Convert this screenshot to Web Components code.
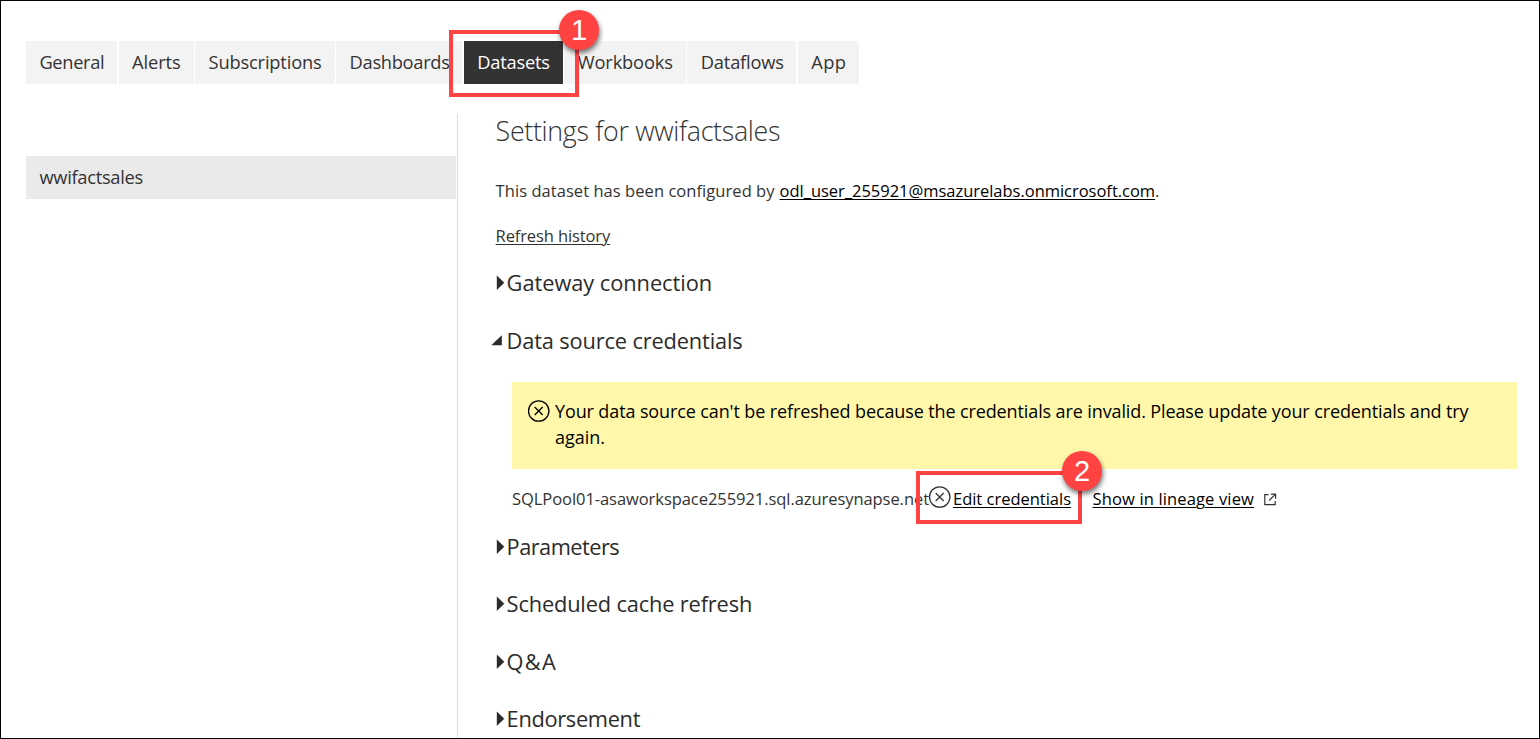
<!DOCTYPE html>
<html lang="en">
<head>
<meta charset="utf-8">
<title>Settings</title>
<style>
html,body{margin:0;height:100%;overflow:hidden;background:#fff}
body{font-family:"Open Sans","Noto Sans",sans-serif;color:#333}
</style>
</head>
<body>
<settings-page></settings-page>
<script>
const define = (name, html, ready) => customElements.define(name, class extends HTMLElement {
  constructor() { super(); this.attachShadow({ mode: 'open' }).innerHTML = html; }
  connectedCallback() { if (ready) ready(this, this.shadowRoot); }
});

// Spreads its text over the width given in the "w" attribute.
define('fit-text', `<style>:host{display:inline-block;white-space:nowrap}span{display:inline-block}
:host([link]) span{text-decoration:underline;text-decoration-thickness:1px;text-underline-offset:2px}
</style><span><slot></slot></span>`, (el, root) => {
  const s = root.querySelector('span'), w = parseFloat(el.getAttribute('w'));
  const n = el.textContent.length;
  s.style.letterSpacing = ((w - s.getBoundingClientRect().width) / n) + 'px';
  el.style.width = w + 'px';
});

define('error-icon', `<style>:host{display:block;width:22px;height:22px;flex:none}svg{display:block}</style>
<svg width="22" height="22" viewBox="0 0 22 22" fill="none" stroke="currentColor" stroke-width="1.3"><circle cx="10.7" cy="11" r="10.2"/><path d="M6.7 7l8 8M14.7 7l-8 8"/></svg>`);

define('external-icon', `<style>:host{display:block;width:13px;height:13px;flex:none}svg{display:block}</style>
<svg width="13" height="13" viewBox="0 0 13 13" fill="none" stroke="#333" stroke-width="1.2"><path d="M4.6 1.6H.8v10h10.4V8M7 1.1h4.6v4.6M11.5 1.2L5.2 7.5"/></svg>`);

define('settings-tab', `<style>
:host{display:block;box-sizing:border-box;height:43px;padding-left:13.4px;background:#f3f3f3;color:#333;font-size:18.3px;line-height:42px;flex:none}
:host([selected]){background:#333;color:#fff}
</style><slot></slot>`, el => { el.style.width = el.getAttribute('width') + 'px'; });

define('dataset-item', `<style>:host{display:block;height:43px;padding-left:13.4px;background:#eaeaea;color:#333;font-size:18.3px;line-height:41px}</style><slot></slot>`);

define('section-heading', `<style>
:host{display:flex;height:57.5px;align-items:flex-start;color:#2b2b2b;font-size:21.8px;line-height:34px}
i{display:block;width:11px;height:34px;flex:none}
svg{display:block;overflow:visible}
.open{display:none}
:host([open]) .open{display:block}:host([open]) .closed{display:none}
</style><i><svg width="11" height="34" fill="#2b2b2b"><path class="closed" d="M.8 9.5V24L8.3 16.7z"/><path class="open" d="M5.8 11.2V21.3H-4.7z"/></svg></i><slot></slot>`);

define('alert-box', `<style>
:host{display:flex;box-sizing:border-box;width:1005px;height:87px;margin:1px 0 0 16.4px;padding:17px 0 0 16px;background:#fff8ab;color:#000;font-size:18px;line-height:25.4px}
error-icon{margin:1px 5px 0 0}
</style><error-icon></error-icon><div><slot></slot></div>`);

define('call-out', `<style>
:host{display:block;position:absolute;box-sizing:border-box;border:4px solid #ff4343}
b{position:absolute;right:-24px;top:-24px;width:40px;height:40px;border-radius:50%;background:#ff4343;color:#fff;font:400 29px/40px "Liberation Sans",Arial,sans-serif;text-align:center;box-shadow:1px 3px 5px rgba(0,0,0,.55)}
</style><b><slot></slot></b>`);

define('settings-page', `<style>
:host{display:block;position:relative;box-sizing:border-box;width:1540px;height:739px;border:1px solid #000;background:#fff;overflow:hidden}
nav{display:flex;gap:1.65px;padding:40px 0 0 25px}
.body{display:flex;margin-top:30px;padding-left:25px}
aside{width:430px;height:582px;padding:42px 1px 0 0;border-right:1px solid #dcdcdc;box-sizing:content-box}
main{padding-left:37.6px;font-size:16.5px}
h1{margin:0;font-size:26.8px;font-weight:300;line-height:34px;height:65px;color:#333}
p{margin:0;height:45px;line-height:24px}
p.refresh{height:42.2px}
.by{display:flex}
.by fit-text[link]{color:#000}
.source{display:flex;margin:18px 0 0 16.4px;height:42.7px;line-height:24px}
.source fit-text[link]{color:#000}
.source error-icon{margin:-1px 2px 0 0}
.source external-icon{margin:6px 0 0 10px}
</style>
<nav>
<settings-tab width="91"><fit-text w="65">General</fit-text></settings-tab>
<settings-tab width="74.9"><fit-text w="48.5">Alerts</fit-text></settings-tab>
<settings-tab width="139.4"><fit-text w="113">Subscriptions</fit-text></settings-tab>
<settings-tab width="126"><fit-text w="100">Dashboards</fit-text></settings-tab>
<settings-tab width="98.9" selected><fit-text w="72.5">Datasets</fit-text></settings-tab>
<settings-tab width="121.4"><fit-text w="95">Workbooks</fit-text></settings-tab>
<settings-tab width="108.8"><fit-text w="83">Dataflows</fit-text></settings-tab>
<settings-tab width="61.4"><fit-text w="35">App</fit-text></settings-tab>
</nav>
<div class="body">
<aside><dataset-item><fit-text w="103.5">wwifactsales</fit-text></dataset-item></aside>
<main>
<h1><fit-text w="284.5">Settings for wwifactsales</fit-text></h1>
<p class="by"><fit-text w="279">This dataset has been configured by</fit-text><fit-text w="375.5" link style="margin-left:5px">odl_user_255921@msazurelabs.onmicrosoft.com</fit-text><span>.</span></p>
<p class="refresh"><fit-text w="114.5" link>Refresh history</fit-text></p>
<section-heading><fit-text w="205.5">Gateway connection</fit-text></section-heading>
<section-heading open><fit-text w="236">Data source credentials</fit-text></section-heading>
<alert-box><fit-text w="913.5">Your data source can't be refreshed because the credentials are invalid. Please update your credentials and try</fit-text><br><fit-text w="50">again.</fit-text></alert-box>
<div class="source"><fit-text w="417">SQLPool01-asaworkspace255921.sql.azuresynapse.net</fit-text><error-icon></error-icon><fit-text w="118" link>Edit credentials</fit-text><fit-text w="161.5" link style="margin-left:21.5px">Show in lineage view</fit-text><external-icon></external-icon></div>
<section-heading><fit-text w="112.5">Parameters</fit-text></section-heading>
<section-heading><fit-text w="245.5">Scheduled cache refresh</fit-text></section-heading>
<section-heading><fit-text w="50.5">Q&amp;A</fit-text></section-heading>
<section-heading><fit-text w="133.5">Endorsement</fit-text></section-heading>
</main>
</div>
<call-out style="left:448px;top:29px;width:130px;height:67px">1</call-out>
<call-out style="left:915px;top:470px;width:166px;height:53px">2</call-out>`);
</script>
</body>
</html>
